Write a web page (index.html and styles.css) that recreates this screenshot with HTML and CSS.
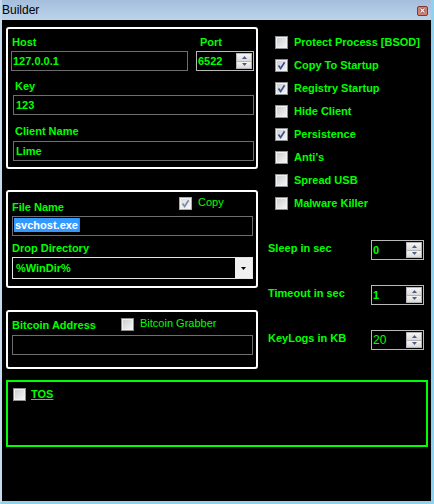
FILE: index.html
```html
<!DOCTYPE html>
<html lang="en">
  <head>
    <meta charset="UTF-8" />
    <meta name="viewport" content="width=device-width, initial-scale=1.0" />
    <title>Builder</title>
    <link rel="stylesheet" href="styles.css">
  </head>
  <body>
    <div class="window">
      <div class="titlebar">
        <span class="title">Builder</span>
        <span class="close-btn">
          <svg width="11" height="10" viewBox="0 0 11 10">
            <rect x="0.5" y="0.5" width="10" height="9" rx="1.5" fill="#d57f72" stroke="#7c3b33" />
            <path d="M3.5 2.5 L7.5 6.5 M7.5 2.5 L3.5 6.5" stroke="#5a2a24" stroke-width="2.4" />
            <path d="M3.5 2.5 L7.5 6.5 M7.5 2.5 L3.5 6.5" stroke="#fff" stroke-width="1.3" />
          </svg>
        </span>
      </div>

      <div class="client">
        <div class="main">
          <div class="left-col">
            <!-- connection settings -->
            <div class="panel panel-conn">
              <div class="host-row">
                <div class="host-field">
                  <div class="lbl pad1">Host</div>
                  <div class="textbox">127.0.0.1</div>
                </div>
                <div class="port-field">
                  <div class="lbl pad4">Port</div>
                  <div class="spin spin-port">
                    <div class="spin-val">6522</div>
                    <div class="spin-btns">
                      <span><svg width="5" height="3"><path d="M0 3 L2.5 0 L5 3 Z" fill="#4e5d86" /></svg></span>
                      <span><svg width="5" height="3"><path d="M0 0 L2.5 3 L5 0 Z" fill="#4e5d86" /></svg></span>
                    </div>
                  </div>
                </div>
              </div>
              <div class="lbl field-lbl key-lbl">Key</div>
              <div class="textbox wide">123</div>
              <div class="lbl field-lbl client-lbl">Client Name</div>
              <div class="textbox wide client-box">Lime</div>
            </div>

            <!-- install settings -->
            <div class="panel panel-file">
              <div class="file-row">
                <div class="lbl file-lbl">File Name</div>
                <div class="check-item copy-item">
                  <span class="cb checked dim">
                    <svg width="11" height="11" viewBox="0 0 11 11"><path d="M2.5 5.5 L4.6 8.4 L8.6 2.2" fill="none" stroke="#7d8bb3" stroke-width="1.7" /></svg>
                  </span>
                  <span class="plain-lbl">Copy</span>
                </div>
              </div>
              <div class="textbox inset filebox">
                <span class="selected">svchost.exe</span><span class="caret"></span>
              </div>
              <div class="lbl drop-lbl">Drop Directory</div>
              <div class="combo">
                <div class="combo-val">%WinDir%</div>
                <div class="combo-btn">
                  <svg width="5" height="3"><path d="M0 0 L5 0 L2.5 3 Z" fill="#000" /></svg>
                </div>
              </div>
            </div>

            <!-- bitcoin -->
            <div class="panel panel-btc">
              <div class="btc-row">
                <div class="lbl btc-lbl">Bitcoin Address</div>
                <div class="check-item btc-item">
                  <span class="cb"></span>
                  <span class="plain-lbl">Bitcoin Grabber</span>
                </div>
              </div>
              <div class="textbox inset btcbox"></div>
            </div>
          </div>

          <div class="right-col">
            <div class="options">
              <div class="opt"><span class="cb"></span><span class="lbl">Protect Process [BSOD]</span></div>
              <div class="opt"><span class="cb checked"><svg width="11" height="11" viewBox="0 0 11 11"><path d="M2.5 5.5 L4.6 8.4 L8.6 2.2" fill="none" stroke="#3f5090" stroke-width="1.7" /></svg></span><span class="lbl">Copy To Startup</span></div>
              <div class="opt"><span class="cb checked"><svg width="11" height="11" viewBox="0 0 11 11"><path d="M2.5 5.5 L4.6 8.4 L8.6 2.2" fill="none" stroke="#3f5090" stroke-width="1.7" /></svg></span><span class="lbl">Registry Startup</span></div>
              <div class="opt"><span class="cb"></span><span class="lbl">Hide Client</span></div>
              <div class="opt"><span class="cb checked"><svg width="11" height="11" viewBox="0 0 11 11"><path d="M2.5 5.5 L4.6 8.4 L8.6 2.2" fill="none" stroke="#3f5090" stroke-width="1.7" /></svg></span><span class="lbl">Persistence</span></div>
              <div class="opt"><span class="cb"></span><span class="lbl">Anti's</span></div>
              <div class="opt"><span class="cb"></span><span class="lbl">Spread USB</span></div>
              <div class="opt"><span class="cb"></span><span class="lbl">Malware Killer</span></div>
            </div>

            <div class="spins">
              <div class="spin-row">
                <span class="lbl spin-lbl">Sleep in sec</span>
                <div class="spin">
                  <div class="spin-val">0</div>
                  <div class="spin-btns">
                    <span><svg width="5" height="3"><path d="M0 3 L2.5 0 L5 3 Z" fill="#4e5d86" /></svg></span>
                    <span><svg width="5" height="3"><path d="M0 0 L2.5 3 L5 0 Z" fill="#4e5d86" /></svg></span>
                  </div>
                </div>
              </div>
              <div class="spin-row">
                <span class="lbl spin-lbl">Timeout in sec</span>
                <div class="spin">
                  <div class="spin-val">1</div>
                  <div class="spin-btns">
                    <span><svg width="5" height="3"><path d="M0 3 L2.5 0 L5 3 Z" fill="#4e5d86" /></svg></span>
                    <span><svg width="5" height="3"><path d="M0 0 L2.5 3 L5 0 Z" fill="#4e5d86" /></svg></span>
                  </div>
                </div>
              </div>
              <div class="spin-row">
                <span class="lbl spin-lbl">KeyLogs in KB</span>
                <div class="spin">
                  <div class="spin-val thin">20</div>
                  <div class="spin-btns">
                    <span><svg width="5" height="3"><path d="M0 3 L2.5 0 L5 3 Z" fill="#4e5d86" /></svg></span>
                    <span><svg width="5" height="3"><path d="M0 0 L2.5 3 L5 0 Z" fill="#4e5d86" /></svg></span>
                  </div>
                </div>
              </div>
            </div>
          </div>
        </div>

        <div class="tos-box">
          <span class="cb"></span>
          <span class="lbl tos-lbl">TOS</span>
        </div>
      </div>
    </div>
  </body>
</html>
```

FILE: styles.css
```css
body {
  margin: 0;
  background: #000;
  font-family: "Liberation Sans", Arial, sans-serif;
}

.window {
  width: 434px;
  height: 504px;
  box-sizing: border-box;
  display: flex;
  flex-direction: column;
  border-left: 2px solid #c4daee;
  border-right: 3px solid #8fd2ef;
  border-bottom: 3px solid #8fd2ef;
}

/* title bar */
.titlebar {
  height: 20px;
  box-sizing: border-box;
  padding-top: 1px;
  display: flex;
  align-items: flex-start;
  background: linear-gradient(#a4bedc, #bcd3eb);
}

.title {
  font-size: 12px;
  line-height: 19px;
  color: #000;
}

.close-btn {
  margin-left: auto;
  margin-right: 3px;
  margin-top: 5px;
  height: 10px;
}

.close-btn svg {
  display: block;
}

.client {
  flex: 1;
  background: #000;
  padding: 7px 0 0 4px;
}

.main {
  display: flex;
}

.left-col {
  width: 252px;
  display: flex;
  flex-direction: column;
}

.right-col {
  flex: 1;
}

/* shared bits */
.lbl {
  display: block;
  font-size: 11px;
  font-weight: bold;
  line-height: 13px;
  height: 13px;
  color: #00ff00;
  white-space: nowrap;
}

.plain-lbl {
  font-size: 11px;
  line-height: 13px;
  color: #00ff00;
  white-space: nowrap;
}

.pad1 { padding-left: 1px; }
.pad4 { padding-left: 4px; }

.panel {
  box-sizing: border-box;
  border: 2px solid #fff;
  border-radius: 3px;
}

.textbox {
  height: 20px;
  box-sizing: border-box;
  border: 1px solid #6e6e6e;
  background: #000;
  color: #00ff00;
  font-size: 11px;
  font-weight: bold;
  line-height: 18px;
  padding-left: 1px;
  white-space: nowrap;
}

.cb {
  width: 13px;
  height: 13px;
  flex: none;
  box-sizing: border-box;
  border: 1px solid #8e8f8f;
  background: linear-gradient(135deg, #c8cbd0, #f7f7f7);
  box-shadow: inset 0 0 0 1px #f2f2f2;
}

.cb svg {
  display: block;
}

.cb.dim {
  border-color: #a8a9aa;
  background: linear-gradient(135deg, #dcdde0, #f7f7f7);
}

/* numeric up-down */
.spin {
  width: 53px;
  height: 20px;
  box-sizing: border-box;
  border: 1px solid #b8b8b8;
  background: #000;
  display: flex;
}

.spin-port {
  width: 58px;
}

.spin-val {
  flex: 1;
  padding-left: 1px;
  font-size: 11px;
  font-weight: bold;
  line-height: 18px;
  color: #00ff00;
}

.spin-val.thin {
  font-weight: normal;
  font-size: 12px;
}

.spin-btns {
  width: 16px;
  padding: 1px 1px 1px 0;
  display: flex;
  flex-direction: column;
}

.spin-btns span {
  flex: 1;
  display: flex;
  align-items: center;
  justify-content: center;
  border: 1px solid #b4b4b4;
  background: linear-gradient(#f5f5f5, #dadada);
}

.spin-btns span + span {
  border-top: none;
}

.spin-btns svg {
  display: block;
}

/* connection panel */
.panel-conn {
  height: 142px;
  padding-top: 7px;
}

.host-row {
  display: flex;
}

.host-field {
  width: 177px;
  margin-left: 3px;
}

.port-field {
  width: 58px;
  margin-left: 8px;
}

.host-field .textbox,
.port-field .spin {
  margin-top: 2px;
}

.field-lbl {
  margin-left: 5px;
  padding-left: 2px;
}

.key-lbl {
  margin-top: 9px;
}

.client-lbl {
  margin-top: 10px;
}

.textbox.wide {
  width: 241px;
  margin: 2px 0 0 5px;
  padding-left: 2px;
}

.textbox.client-box {
  margin-top: 3px;
}

/* file panel */
.panel-file {
  margin-top: 21px;
  height: 98px;
}

.file-row {
  display: flex;
  height: 22px;
}

.file-lbl {
  width: 167px;
  padding-left: 4px;
  align-self: flex-end;
}

.check-item {
  display: flex;
  align-items: flex-start;
  gap: 6px;
}

.copy-item {
  margin-top: 5px;
}

.copy-item .plain-lbl,
.btc-item .plain-lbl {
  margin-top: -1px;
}

.textbox.inset {
  width: 241px;
  margin-left: 4px;
}

.filebox {
  margin-top: 2px;
  display: flex;
  align-items: center;
  padding-left: 1px;
}

.selected {
  height: 14px;
  line-height: 14px;
  margin-bottom: 2px;
  padding: 0 1px;
  background: #3399ff;
  color: #fff;
}

.caret {
  width: 1px;
  height: 14px;
  margin-bottom: 2px;
  background: #cc6600;
}

.drop-lbl {
  margin-top: 6px;
  padding-left: 4px;
}

.combo {
  width: 241px;
  height: 22px;
  box-sizing: border-box;
  margin: 2px 0 0 4px;
  border: 1px solid #e4e4e4;
  display: flex;
}

.combo-val {
  flex: 1;
  padding-left: 3px;
  font-size: 11px;
  font-weight: bold;
  line-height: 20px;
  color: #00ff00;
}

.combo-btn {
  width: 17px;
  background: #f0f0f0;
  display: flex;
  align-items: center;
  justify-content: center;
}

/* bitcoin panel */
.panel-btc {
  margin-top: 22px;
  height: 59px;
}

.btc-row {
  display: flex;
  height: 20px;
}

.btc-lbl {
  width: 109px;
  padding-left: 4px;
  margin-top: 7px;
}

.btc-item {
  margin-top: 6px;
}

.btcbox {
  margin-top: 3px;
}

/* option checkboxes */
.options {
  padding-top: 9px;
}

.opt {
  display: flex;
  align-items: flex-start;
  gap: 6px;
  height: 23px;
  padding-left: 17px;
}

.spins {
  margin-top: 20px;
}

.spin-row {
  display: flex;
  align-items: flex-start;
  padding-left: 10px;
  margin-bottom: 25px;
}

.spin-lbl {
  width: 103px;
  margin-top: 2px;
}

/* terms box */
.tos-box {
  margin-top: 5px;
  width: 422px;
  height: 67px;
  box-sizing: border-box;
  border: 2px solid #00ff00;
  padding: 6px 0 0 5px;
  display: flex;
  align-items: flex-start;
  gap: 5px;
}

.tos-lbl {
  text-decoration: underline;
}
```
